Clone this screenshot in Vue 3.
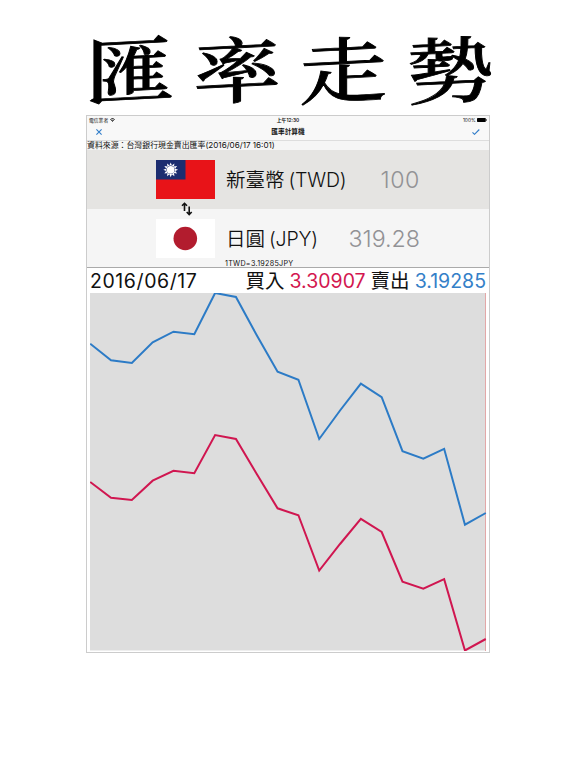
<template>
  <main class="page">
    <h1 class="title"><span v-for="c in '匯率走勢'" :key="c">{{ c }}</span></h1>
    <section class="tablet">
      <div class="status">
        <span class="carrier">電信業者
          <svg width="5" height="4" viewBox="0 0 12 10"><path d="M0 3.5Q6-2 12 3.5L10.7 5Q6 .5 1.3 5ZM2.3 6Q6 2.5 9.7 6L8.4 7.4Q6 5.2 3.6 7.4ZM4.5 8.2Q6 7 7.5 8.2L6 10Z" /></svg>
        </span>
        <b>上午12:30</b>
        <span class="battery">100%
          <svg width="10" height="4" viewBox="0 0 10 4"><rect width="8.8" height="4" rx=".7" /><path d="M9.2 1.2h.7v1.6h-.7z" /></svg>
        </span>
      </div>
      <header class="nav">
        <svg class="close" width="6" height="6" viewBox="0 0 6 6"><path d="M.4.4l5.2 5.2M5.6.4L.4 5.6" /></svg>
        <h2>匯率計算機</h2>
        <svg class="check" width="8" height="6" viewBox="0 0 8 6"><path d="M.5 3.3l2 2L7.3.5" /></svg>
      </header>
      <p class="source"><span>資料來源：台灣銀行現金賣出匯率</span><span class="stamp">(2016/06/17 16:01)</span></p>

      <div class="row from">
        <svg class="flag" width="59" height="39" viewBox="0 0 59 39">
          <path fill="#e81318" d="M0 0h59v39H0z" />
          <path fill="#1c2d70" d="M0 0h29.5v19.5H0z" />
          <g transform="translate(14.7 9.8)">
            <path v-for="n in 12" :key="n" fill="#fff" d="M-1.4-4L0-7.4 1.4-4Z" :transform="`rotate(${n * 30})`" />
            <circle r="4.3" fill="#1c2d70" />
            <circle r="3.9" fill="#fff" />
          </g>
        </svg>
        <span class="name"><span>新臺幣</span><span class="code">(TWD)</span></span>
        <span class="amount hundred">100</span>
      </div>
      <div class="row to">
        <svg class="swap" width="12" height="14" viewBox="0 0 12 14"><path d="M3.5 9V1.3M1 3.8l2.5-2.5L6 3.8M8.2 4.5v8M5.7 10l2.5 2.5 2.5-2.5" /></svg>
        <svg class="flag" width="59" height="39" viewBox="0 0 59 39">
          <path fill="#fff" d="M0 0h59v39H0z" />
          <circle cx="29.3" cy="19.5" r="11.8" fill="#b21c2e" />
        </svg>
        <span class="name"><span>日圓</span><span class="code">(JPY)</span></span>
        <span class="amount">319.28</span>
        <span class="unit">1TWD=3.19285JPY</span>
      </div>

      <div class="summary">
        <span class="date">2016/06/17</span>
        <span>買入</span><span class="num buy">3.30907</span>
        <span>賣出</span><span class="num sell">3.19285</span>
      </div>
      <svg class="chart" width="397" height="358" viewBox="90 293 397 358">
        <path class="area" d="M90 293h396v357.5H90z" />
        <path class="cursor" d="M485.5 293v358" />
        <polyline class="sell-line" :points="points(sell)" />
        <polyline class="buy-line" :points="points(buy)" />
      </svg>
    </section>
  </main>
</template>

<script setup>
const sell = [343.7, 360.3, 363, 342.3, 331.7, 334.2, 293, 297, 335.3, 371.8, 379.7, 439, 410.5, 383.6, 397.2, 451.2, 458.7, 448.8, 524.7, 513]
const buy = [482, 497.7, 500, 480.7, 470.8, 473.2, 435, 439, 474, 508.3, 515.2, 570.5, 544, 518.8, 532, 581.7, 588.7, 579.2, 650.5, 639]

const points = (list) => list.map((y, i) => `${90.2 + i * 20.82},${y}`).join(' ')
</script>

<style>
body {
  margin: 0;
  background: #fff;
}
</style>

<style scoped>
.page {
  width: 576px;
  height: 768px;
  overflow: hidden;
  box-sizing: border-box;
  padding-left: 86px;
  color: #111;
  font-family: Inter, "Noto Sans CJK TC", sans-serif;
}

.title {
  display: flex;
  width: 426px;
  height: 115px;
  margin: 0 0 0 -9px;
  padding-top: 22px;
  box-sizing: border-box;
  color: #000;
  font: 500 78px/88px "AR PL UKai TW", "Noto Serif CJK TC", "Noto Sans CJK TC", serif;
}

.title span {
  flex: 1;
  height: 88px;
  text-align: center;
  transform: skewY(-3deg) scale(1.12, .92);
  -webkit-text-stroke: .9px #000;
}

.tablet {
  width: 404px;
  height: 538px;
  box-sizing: border-box;
  border: 1px solid #ccc;
  background: #fff;
}

.status,
.nav {
  display: grid;
  grid-template-columns: 1fr auto 1fr;
  align-items: center;
  background: #f8f8f8;
}

.status {
  height: 8px;
  padding: 0 2px;
  font-size: 4.8px;
  line-height: 8px;
}

.status svg {
  margin-bottom: -.3px;
}

.status b {
  font-weight: 600;
}

.battery {
  text-align: right;
}

.nav {
  height: 16px;
  padding: 0 9px;
  border-bottom: 1px solid #ddd;
}

.nav h2 {
  margin: 0;
  font-size: 6.7px;
  line-height: 16px;
  font-weight: 700;
}

.nav svg {
  fill: none;
  stroke: #2f7cc9;
  stroke-width: 1.1;
}

.check {
  justify-self: end;
}

.source {
  display: flex;
  height: 9px;
  margin: 0;
  background: #f5f5f5;
  font-size: 7.9px;
  line-height: 9px;
  white-space: nowrap;
}

.stamp {
  font-size: 8.1px;
}

.row {
  position: relative;
  display: flex;
  height: 59px;
  box-sizing: border-box;
  padding: 0 69px;
  align-items: center;
  background: #e5e4e2;
}

.to {
  background: #f5f5f5;
  border-bottom: 1px solid #aaa;
}

.name {
  display: flex;
  margin-left: 11px;
  font-size: 19.5px;
  line-height: 30px;
  font-weight: 350;
}

.to .name,
.to .amount {
  padding-top: 2px;
}

.code {
  margin-left: 4px;
  letter-spacing: -.2px;
}

.amount {
  margin-left: auto;
  color: #929295;
  font-size: 23.2px;
  font-weight: 300;
}

.hundred {
  letter-spacing: .6px;
}

.swap {
  position: absolute;
  left: 94px;
  top: -7px;
  fill: none;
  stroke: #111;
  stroke-width: 1.6;
}

.unit {
  position: absolute;
  left: 138px;
  bottom: -1px;
  font-size: 7.2px;
  line-height: 8px;
  letter-spacing: .26px;
}

.summary {
  display: flex;
  height: 25px;
  box-sizing: border-box;
  padding: 2px 3px 0;
  align-items: center;
  font-size: 19.5px;
  line-height: 23px;
  white-space: nowrap;
}

.date {
  margin-right: auto;
  letter-spacing: .58px;
}

.num {
  margin: 0 5px;
}

.num.sell {
  margin-right: 0;
}

.buy {
  color: #d3174f;
}

.sell {
  color: #347fc8;
}

.chart {
  display: block;
  margin-left: 3px;
}

.area {
  fill: #ddd;
}

.cursor {
  stroke: #e3a8a8;
}

polyline {
  fill: none;
  stroke-width: 2;
}

.sell-line {
  stroke: #2c7bc6;
}

.buy-line {
  stroke: #d01650;
}
</style>
